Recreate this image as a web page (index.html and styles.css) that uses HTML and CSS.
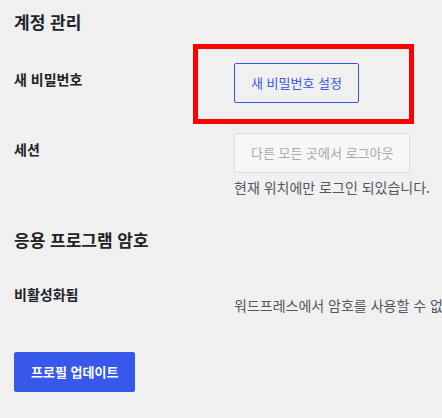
FILE: index.html
```html
<!DOCTYPE html>
<html lang="ko">
<head>
<meta charset="utf-8">
<title>프로필</title>
<link rel="stylesheet" href="styles.css">
</head>
<body>
<div class="page">
  <h2 class="section-title">계정 관리</h2>
  <div class="form-table">
    <div class="row row-password">
      <div class="label">새 비밀번호</div>
      <div class="field">
        <button class="btn btn-secondary" type="button">새 비밀번호 설정</button>
        <div class="highlight" aria-hidden="true"></div>
      </div>
    </div>
    <div class="row row-sessions">
      <div class="label">세션</div>
      <div class="field">
        <button class="btn btn-disabled" type="button" disabled>다른 모든 곳에서 로그아웃</button>
        <p class="description">현재 위치에만 로그인 되있습니다.</p>
      </div>
    </div>
  </div>

  <h2 class="section-title section-title-2">응용 프로그램 암호</h2>
  <div class="form-table form-table-2">
    <div class="row row-apppw">
      <div class="label">비활성화됨</div>
      <div class="field">
        <p class="note">워드프레스에서 암호를 사용할 수 없습니다.</p>
      </div>
    </div>
  </div>

  <div class="submit">
    <button class="btn btn-primary" type="submit">프로필 업데이트</button>
  </div>
</div>
</body>
</html>
```

FILE: styles.css
```css
html, body {
  margin: 0;
  padding: 0;
  overflow: hidden;
}
body {
  background: #f0f0f1;
  color: #1d2327;
  font-family: "Noto Sans CJK KR", "Noto Sans", sans-serif;
  font-size: 13px;
}
.page {
  padding: 0 14px;
  width: 600px;
}
.section-title {
  font-size: 17px;
  font-weight: 700;
  line-height: 22px;
  margin: 11px 0 0;
}
.section-title-2 {
  margin-top: 17px;
}
.form-table {
  margin-top: 15px;
}
.form-table-2 {
  margin-top: 12px;
}
.row {
  display: grid;
  grid-template-columns: 210px 1fr;
}
.label {
  padding: 22px 0 19px;
  font-size: 14px;
  font-weight: 700;
  line-height: 18px;
}
.field {
  position: relative;
  padding: 15px 0 15px 10px;
}
.btn {
  display: inline-block;
  font-family: inherit;
  font-size: 13px;
  height: 40px;
  padding: 0 16px;
  border-radius: 2px;
  border: 1px solid;
  line-height: 38px;
  white-space: nowrap;
}
.btn-secondary {
  background: transparent;
  color: #3858e9;
  border-color: #3858e9;
}
.btn-disabled {
  background: #f6f7f7;
  color: #a7aaad;
  border-color: #dcdcde;
}
.highlight {
  position: absolute;
  left: -31px;
  top: -4px;
  width: 211px;
  height: 70px;
  border: 5px solid #ff0000;
}
.description {
  margin: 4px 0 0;
  color: #50575e;
  font-size: 14px;
  line-height: 20px;
  white-space: nowrap;
}
.note {
  margin: 17px 0 0;
  color: #50575e;
  font-size: 14px;
  line-height: 20px;
  white-space: nowrap;
}
.submit {
  padding: 22px 0 0;
}
.btn-primary {
  background: #3858e9;
  border-color: #3858e9;
  color: #fff;
  font-weight: 700;
}
```
